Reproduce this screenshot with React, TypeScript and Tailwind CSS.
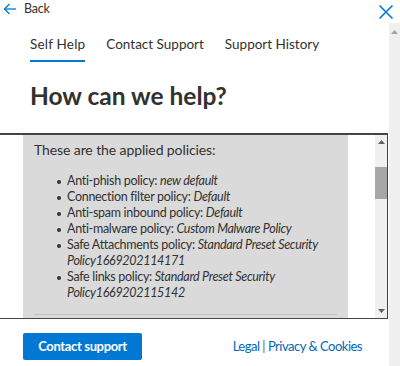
const font = { fontFamily: '"Segoe UI", Lato, "Open Sans", sans-serif' };

const policies = [
  { label: "Anti-phish policy:", value: "new default" },
  { label: "Connection filter policy:", value: "Default" },
  { label: "Anti-spam inbound policy:", value: "Default" },
  { label: "Anti-malware policy:", value: "Custom Malware Policy" },
  { label: "Safe Attachments policy:", value: "Standard Preset Security Policy1669202114171" },
  { label: "Safe links policy:", value: "Standard Preset Security Policy1669202115142" },
];

function Arrow({ up, color }: { up?: boolean; color: string }) {
  return (
    <svg width="7" height="4" viewBox="0 0 7 4" className="block">
      {up ? <path d="M0 4 L3.5 0 L7 4 Z" fill={color} /> : <path d="M0 0 L3.5 4 L7 0 Z" fill={color} />}
    </svg>
  );
}

export default function App() {
  return (
    <div className="w-[400px] h-[366px] bg-white overflow-hidden text-[#323130] flex flex-col" style={font}>
      {/* top bar */}
      <div className="h-[23px] flex items-start justify-between shrink-0">
        <div className="flex items-center h-[18px] pl-[3px] gap-[7px]">
          <svg width="14" height="12" viewBox="0 0 14 12" fill="none" stroke="#0078d4" strokeWidth="1.3">
            <path d="M13 6 H1.5" />
            <path d="M6.5 1 L1.5 6 L6.5 11" />
          </svg>
          <span className="text-[12.5px] leading-none tracking-[-0.2px] text-[#323130]">Back</span>
        </div>
        <svg width="16" height="16" viewBox="0 0 16 16" className="mt-[4px] mr-[6px]" stroke="#0078d4" strokeWidth="1.6">
          <path d="M1.5 1.5 L14.5 14.5 M14.5 1.5 L1.5 14.5" />
        </svg>
      </div>

      <div className="flex flex-1 min-h-0">
        <div className="w-[389px] shrink-0 flex flex-col">
          {/* tabs */}
          <div className="flex gap-[21px] pl-[30px] pt-[11px] text-[13.5px] leading-[20px] text-[#323130]">
            <div className="flex flex-col">
              <span className="tracking-[0.2px]">Self Help</span>
              <span className="mt-[6px] h-[2px] bg-[#0078d4]" />
            </div>
            <span>Contact Support</span>
            <span>Support History</span>
          </div>

          <h1 className="pl-[30px] mt-[18px] text-[24.5px] leading-[32px] font-bold text-[#323130]">How can we help?</h1>

          {/* scroll box */}
          <div className="mt-[21px] w-[388px] h-[186px] border-t-2 border-b border-r border-[#444] flex">
            <div className="flex-1 pl-[23px] pr-[27px]">
              <div className="h-full bg-[#dadada] px-[11px] pt-[5px]">
                <p className="text-[14px] leading-[20px] tracking-[-0.1px]">These are the applied policies:</p>
                <ul className="mt-[13px] pl-[33px] text-[12.5px] leading-[16px] tracking-[-0.3px]">
                  {policies.map((p) => (
                    <li key={p.label} className="relative">
                      <span className="absolute -left-[10px] top-[7px] w-[3.5px] h-[3.5px] rounded-full bg-[#323130]" />
                      {p.label} <i>{p.value}</i>
                    </li>
                  ))}
                </ul>
                <div className="mt-[13px] border-t border-[#c2c2c2]" />
              </div>
            </div>
            <div className="w-[12px] bg-[#f0f0f0] flex flex-col items-center">
              <div className="mt-[5px]"><Arrow up color="#606060" /></div>
              <div className="mt-[23px] w-full h-[32px] bg-[#a6a6a6]" />
              <div className="mt-auto mb-[5px]"><Arrow color="#606060" /></div>
            </div>
          </div>

          {/* footer */}
          <div className="flex items-center justify-between pl-[23px] pr-[27px] mt-[14px]">
            <button className="w-[119px] h-[27px] bg-[#0078d4] text-white text-[13px] tracking-[-0.35px] font-bold rounded-[2px]">
              Contact support
            </button>
            <div className="text-[13px] tracking-[-0.5px] text-[#0067b8]">
              Legal <span className="text-[#605e5c]">|</span> Privacy &amp; Cookies
            </div>
          </div>
        </div>
        <div className="w-[11px] ml-auto bg-[#f0f0f0] flex flex-col items-center">
          <div className="mt-[7px]"><Arrow up color="#a3a3a3" /></div>
        </div>
      </div>
    </div>
  );
}
